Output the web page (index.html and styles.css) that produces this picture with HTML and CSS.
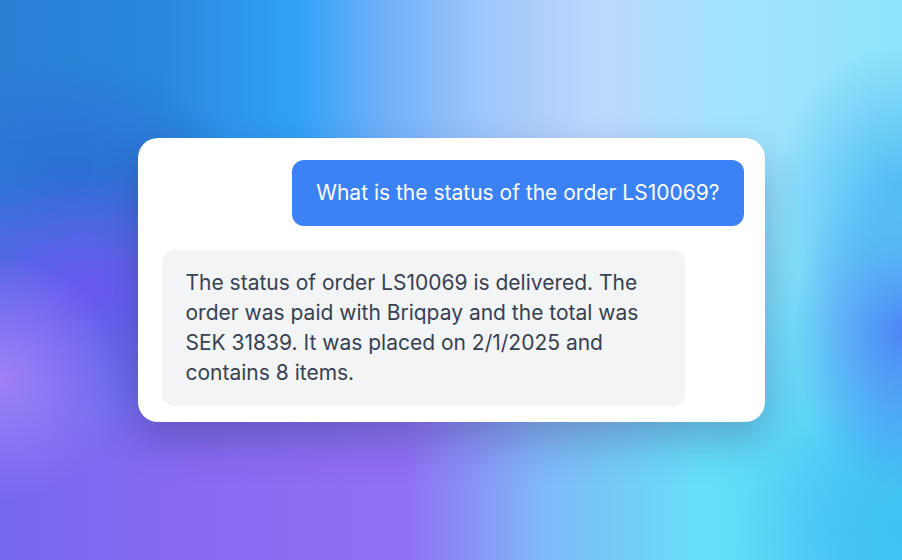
FILE: index.html
```html
<!DOCTYPE html>
<html lang="en">
<head>
  <meta charset="UTF-8">
  <meta name="viewport" content="width=device-width, initial-scale=1.0">
  <title>Order Assistant</title>
  <link rel="stylesheet" href="styles.css">
</head>
<body>
  <div class="chat-card">
    <div class="message user">What is the status of the order LS10069?</div>
    <div class="message bot">The status of order LS10069 is delivered. The order was paid with Briqpay and the total was SEK 31839. It was placed on 2/1/2025 and contains 8 items.</div>
  </div>
</body>
</html>
```

FILE: styles.css
```css
/* General Styling */
body {
  margin: 0;
  height: 100vh;
  display: flex;
  justify-content: center;
  align-items: center;
  font-family: 'Inter', 'Noto Sans', sans-serif;
  overflow: hidden;
  background: linear-gradient(to right, #7468f0 0%, #8a6af0 22%, #9070f4 45%, #80b8f8 60%, #66e0f8 78%, #48c8f4 100%);
}

/* Background layers */
body::before,
body::after {
  content: '';
  position: fixed;
  inset: 0;
  z-index: -1;
}

body::before {
  background: linear-gradient(to right, #2b7fd6 0%, #2a88dc 18%, #31a2f7 33%, #6cb0f9 42%, #9cc6fb 53%, #bcd8fc 66%, #a6e2fd 78%, #8ee4fa 100%);
  -webkit-mask-image: linear-gradient(to bottom, #000 25%, transparent 82%);
  mask-image: linear-gradient(to bottom, #000 25%, transparent 82%);
}

body::after {
  background:
    radial-gradient(ellipse 14% 22% at 0% 68%, #a080f8 0%, rgba(160, 128, 248, 0) 100%),
    radial-gradient(ellipse 20% 22% at 10% 52%, #6a58ee 0%, rgba(106, 88, 238, 0) 100%),
    radial-gradient(ellipse 18% 22% at 8% 32%, #2a6ed2 0%, rgba(42, 110, 210, 0) 100%),
    radial-gradient(ellipse 14% 26% at 100% 34%, #52bcf4 0%, rgba(82, 188, 244, 0) 100%),
    radial-gradient(ellipse 12% 30% at 100% 58%, #4c84f5 0%, rgba(76, 132, 245, 0) 100%),
    radial-gradient(ellipse 18% 25% at 100% 95%, #40c0f4 0%, rgba(64, 192, 244, 0) 100%);
}

/* Chat Card */
.chat-card {
  box-sizing: border-box;
  width: 627px;
  padding: 22px 21px 16px 24px;
  display: flex;
  flex-direction: column;
  gap: 24px;
  background: #ffffff;
  border-radius: 20px;
  box-shadow: 0 18px 40px rgba(40, 20, 90, 0.28);
}

.message {
  font-size: 21px;
  line-height: 30px;
  padding: 18px 24px;
  border-radius: 12px;
  max-width: 90%;
  box-sizing: border-box;
}

.message.user {
  align-self: flex-end;
  background: #3b82f6;
  color: #ffffff;
}

.message.bot {
  align-self: flex-start;
  background: #f3f4f6;
  color: #374151;
}
```
